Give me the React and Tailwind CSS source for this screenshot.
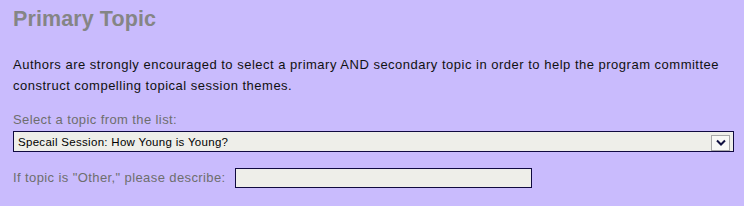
import React from "react";

const App = () => {
  return (
    <div
      className="w-[744px] h-[206px] bg-[#c9bbfd] pl-[13px] pt-[7px] overflow-hidden"
      style={{ fontFamily: '"Liberation Sans", Arial, sans-serif' }}
    >
      <h1 className="text-[21.5px] leading-[24px] font-bold text-[#858585] tracking-[0.1px]">Primary Topic</h1>
      <p className="mt-[23px] w-[720px] text-[13px] leading-[21px] tracking-[0.5px] text-[#111111]">
        Authors are strongly encouraged to select a primary AND secondary topic in order to help the program committee
        construct compelling topical session themes.
      </p>
      <div className="mt-[16px] text-[13px] leading-[16px] tracking-[0.4px] text-[#6e6e6e]">
        Select a topic from the list:
      </div>
      <div className="mt-[3px] w-[721px] h-[21px] border border-[#100a40] bg-[#eeeee9] flex items-center justify-between pl-[4px] pr-[3px]">
        <span className="text-[11.5px] leading-[14px] tracking-[0.3px] text-black">
          Specail Session: How Young is Young?
        </span>
        <div className="w-[19px] h-[16px] mt-[2px] bg-[#f8f8f6] border border-[#a8a8a8] flex items-center justify-center">
          <svg width="10" height="7" viewBox="0 0 10 7">
            <path d="M1 1.5 L5 5.5 L9 1.5" fill="none" stroke="#101040" strokeWidth="2" />
          </svg>
        </div>
      </div>
      <div className="mt-[16px] flex items-center">
        <span className="text-[13px] leading-[16px] tracking-[0.4px] text-[#6e6e6e]">
          If topic is "Other," please describe:
        </span>
        <div className="ml-[9px] w-[297px] h-[20px] border border-[#100a40] bg-[#eeeee9]" />
      </div>
    </div>
  );
};

export default App;
